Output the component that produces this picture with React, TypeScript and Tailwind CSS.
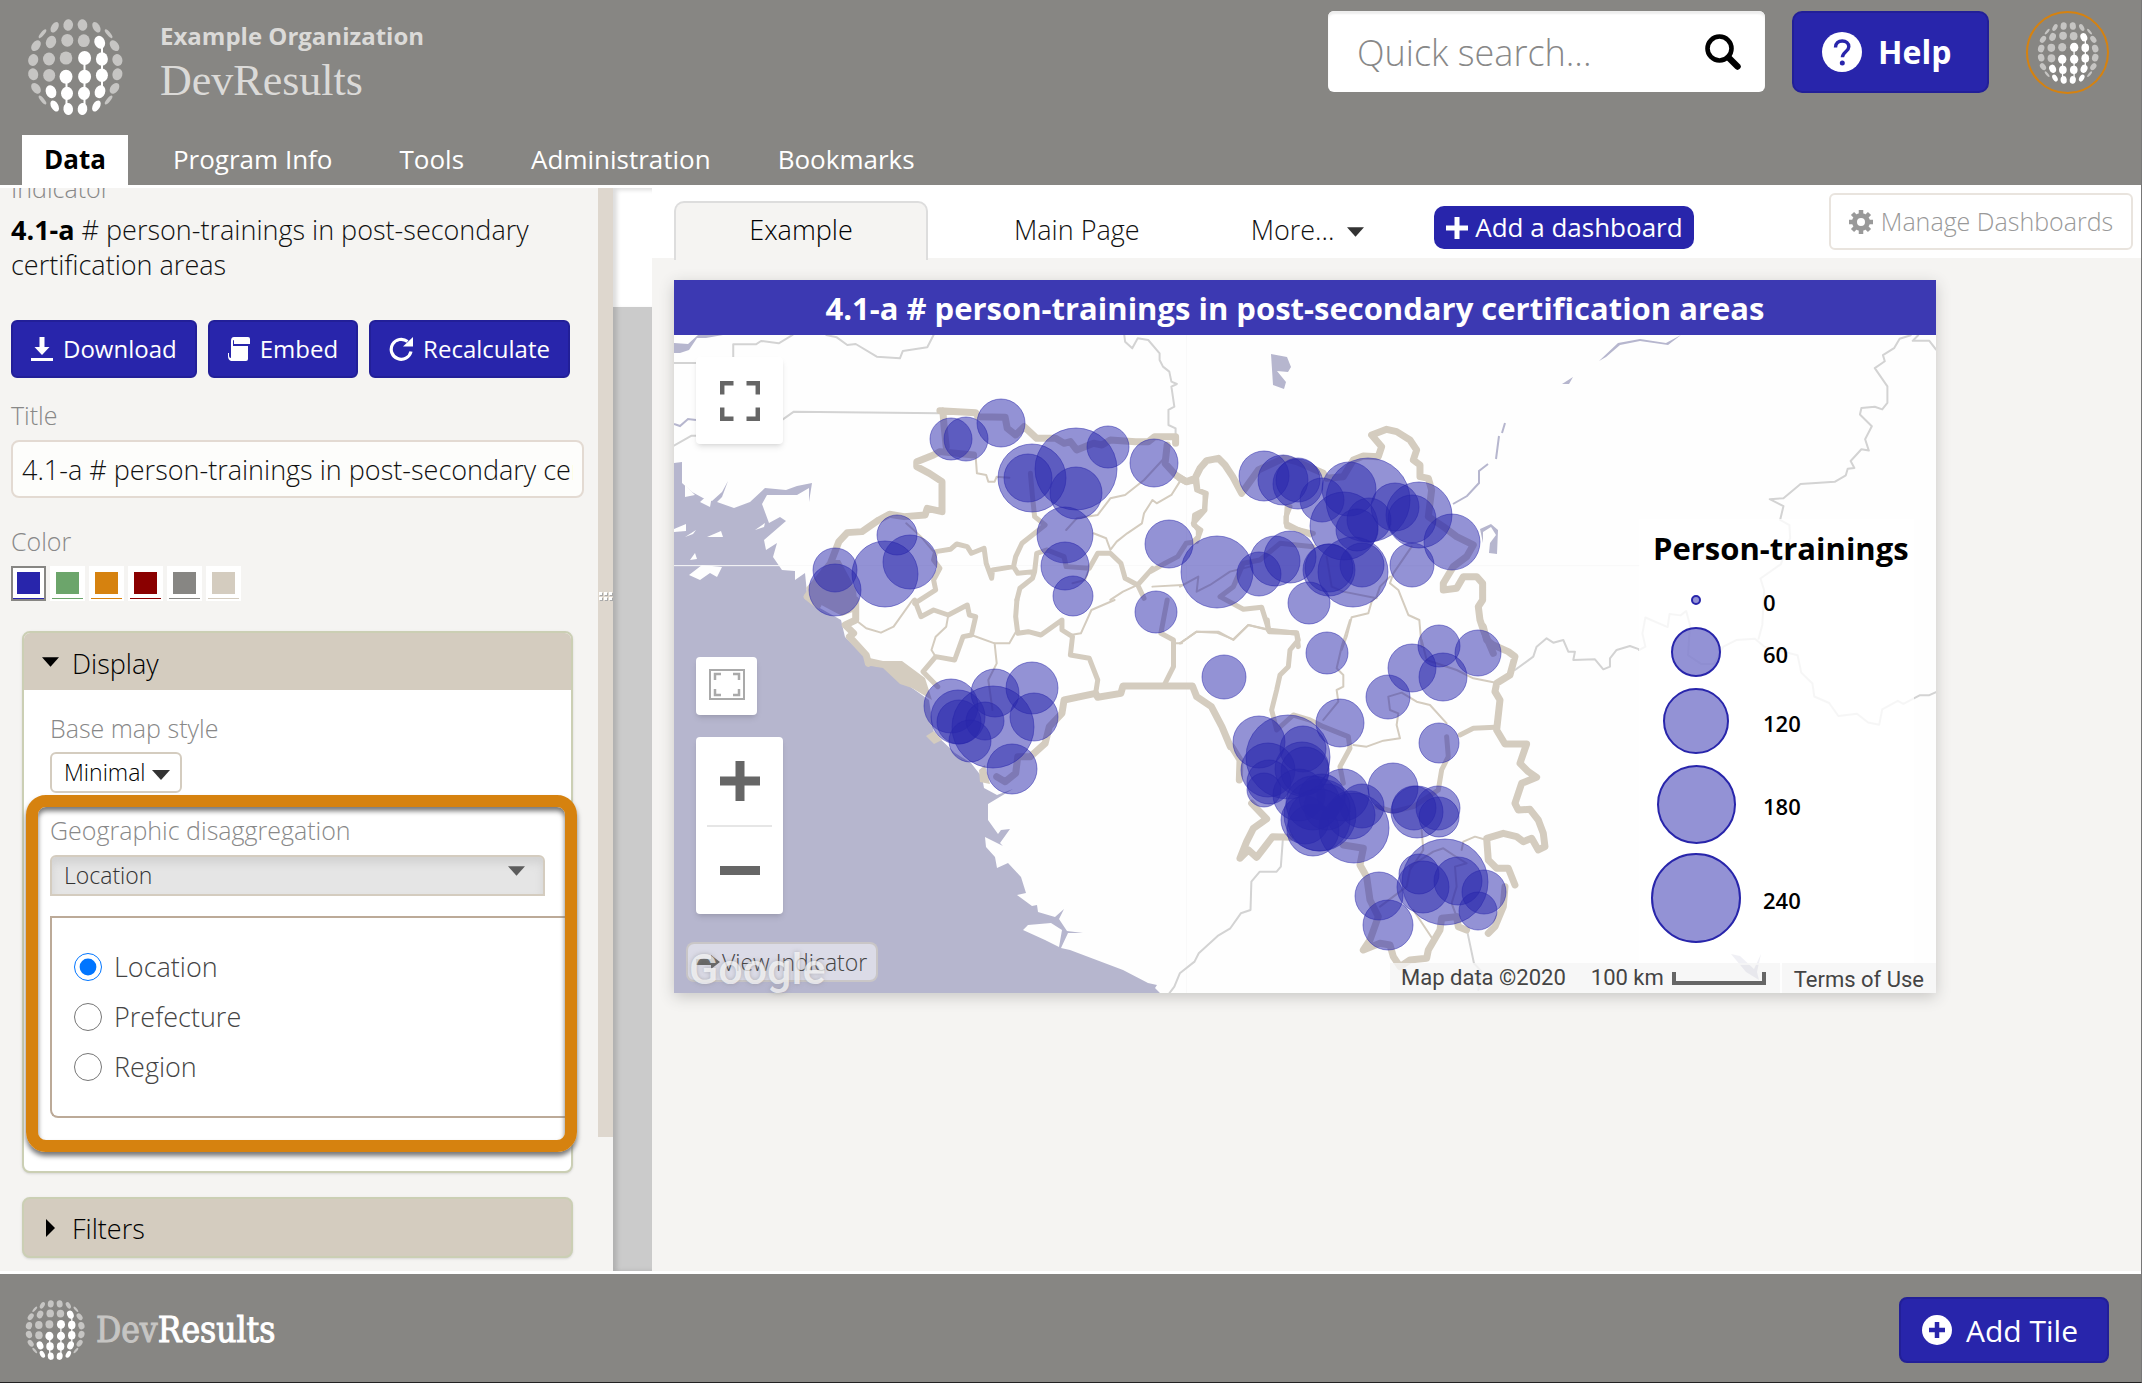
import { useState } from "react";
import type { ReactNode } from "react";

const navItems = ["Data", "Program Info", "Tools", "Administration", "Bookmarks"];

const colors = [
  { name: "Blue", fill: "bg-[#2825ab]" },
  { name: "Green", fill: "bg-[#6ca56b]" },
  { name: "Orange", fill: "bg-[#d6820f]" },
  { name: "Red", fill: "bg-[#8a0000]" },
  { name: "Gray", fill: "bg-[#878683]" },
  { name: "Tan", fill: "bg-[#d4ccbf]" },
];

const levels = ["Location", "Prefecture", "Region"];

const legend = [
  { label: "0", size: "size-[10px]", row: "h-[34px]" },
  { label: "60", size: "size-[50px]", row: "h-[50px]" },
  { label: "120", size: "size-[66px]", row: "h-[68px]" },
  { label: "180", size: "size-[79px]", row: "h-[79px]" },
  { label: "240", size: "size-[90px]", row: "h-[88px]" },
];

// x, y, rx, ry, rotation, bright
const dots: [number, number, number, number, number, number][] = [
  [42.5, 33.7, 1.8, 5.5, 40, 0], [54.7, 27.3, 3.4, 5.8, 30, 0], [68.2, 25, 4.8, 5.8, 8, 0],
  [82.5, 25, 4.8, 5.8, -8, 0], [96.4, 27.3, 3.4, 5.8, -30, 0], [108.6, 33.7, 1.8, 5.5, -40, 0],
  [36, 45.7, 4, 6, 38, 0], [51, 42, 5, 6.4, 22, 0], [67.3, 40.3, 6, 6.4, 0, 0],
  [83.8, 40.7, 6, 6.4, 0, 0], [99.7, 42.3, 5.2, 6.6, -22, 1], [114.5, 45.7, 4, 6, -38, 0],
  [33.2, 60, 5, 6, 15, 0], [49, 59, 6, 6.4, 0, 0], [66, 58, 6.3, 6.6, 0, 0],
  [84.6, 58, 6.5, 7, 0, 1], [101.9, 59, 6, 6.8, 0, 1], [117.4, 60, 5, 6, -15, 0],
  [33.2, 74.3, 5, 6, -15, 0], [49.2, 75.3, 6, 6.4, 0, 0], [66, 76.7, 6.5, 7, 0, 1],
  [84.6, 76.7, 6.5, 7, 0, 1], [101.9, 75.3, 6, 6.8, 0, 1], [117.4, 74.3, 5, 6, 15, 0],
  [36, 88.3, 4, 6, -38, 0], [51, 91.7, 5.2, 6.6, -22, 1], [67, 93.3, 6, 6.6, 0, 1],
  [84, 93.3, 6, 6.6, 0, 1], [100, 91.7, 5.2, 6.6, 22, 1], [114.5, 88.3, 4, 6, 38, 0],
  [42.5, 100, 1.8, 5.5, -40, 0], [54.7, 106, 3.6, 6, -30, 1], [68.2, 109, 4.8, 6, -8, 1],
  [82.5, 109, 4.8, 6, 8, 1], [96.4, 106, 3.6, 6, 30, 1], [108.6, 100, 1.8, 5.5, 40, 0],
];

// One bubble per training site: x, y, radius
const bubbles = [
  [951, 439, 21], [966, 439, 22], [1001, 423, 24], [1076, 469, 41], [1032, 478, 34], [1028, 478, 24],
  [1076, 493, 26], [1108, 447, 21], [1154, 463, 24], [1065, 535, 28], [1065, 566, 24], [1073, 596, 20],
  [897, 535, 20], [910, 562, 27], [885, 574, 33], [835, 570, 22], [835, 590, 26], [1169, 544, 24],
  [1156, 612, 21], [1264, 476, 25], [1283, 480, 25], [1298, 484, 25], [1298, 480, 22], [1322, 500, 22],
  [1368, 500, 42], [1349, 489, 27], [1344, 526, 34], [1395, 507, 24], [1419, 515, 33], [1412, 519, 24],
  [1452, 542, 28], [1369, 520, 22], [1357, 530, 21], [1412, 565, 22], [1353, 572, 35], [1362, 565, 22],
  [1329, 570, 26], [1329, 568, 24], [1309, 603, 21], [1217, 572, 36], [1259, 574, 22], [1275, 561, 25],
  [1290, 557, 26], [1327, 653, 21], [1224, 677, 22], [1439, 646, 21], [1478, 653, 23], [1412, 668, 24],
  [1443, 677, 24], [1388, 697, 22], [1439, 743, 20], [1340, 723, 24], [1259, 742, 26], [1288, 757, 42],
  [1303, 749, 23], [1268, 770, 27], [1302, 769, 27], [1305, 771, 24], [1269, 782, 22], [1264, 790, 17],
  [1299, 795, 26], [1343, 795, 26], [1362, 806, 22], [1393, 788, 25], [1417, 812, 26], [1414, 808, 22],
  [1438, 808, 22], [1439, 817, 20], [1354, 828, 35], [1351, 815, 24], [1320, 815, 36], [1305, 820, 24],
  [1313, 830, 26], [1322, 797, 23], [1327, 807, 23], [1313, 803, 27], [1319, 820, 31], [1445, 882, 43],
  [1419, 874, 20], [1423, 887, 26], [1458, 881, 24], [1484, 892, 22], [1478, 911, 19], [1379, 896, 24],
  [1388, 925, 25], [951, 706, 27], [958, 717, 27], [959, 722, 22], [993, 727, 41], [995, 693, 24],
  [1032, 688, 26], [1034, 717, 24], [985, 721, 19], [970, 741, 21], [1012, 769, 25],
];

// Border lines come in five sheets, each with its own origin and scale.
const sheets = [
  {
    transform: "translate(660 180) scale(0.4209 0.3333)",
    thick:
      "M665,692 L750,698 755,710 820,712 825,745 845,765 865,740 895,775 940,775 960,790 975,785 990,810 1030,790 1050,795 1070,780 1130,785 1160,785 1175,770 1225,770 1225,790 M672,692 L675,740 680,800 M745,825 L665,815 650,825 610,845 610,860 640,880 670,905 670,995 635,985 630,1005 580,1010 545,1003 520,1020 480,1055 445,1058 425,1085 405,1150 375,1200 350,1250 M1205,795 L1200,850 1225,885 1250,905 1270,900",
    medium:
      "M880,880 L885,950 890,1010 915,1035 860,1090 845,1130 840,1160 790,1170 788,1195 775,1150 770,1105 740,1120 730,1100 705,1092 690,1108 655,1115 650,1140 665,1165 650,1200 655,1230 605,1270 M840,1160 L850,1180 890,1175 885,1195 855,1225 848,1260 M890,1175 L895,1120 920,1110 960,1130 965,1160 1020,1165 1040,1120 1070,1120 1095,1150 1105,1195 1135,1215 1170,1165 M1275,895 L1278,930 1298,940 1293,990 1270,1005 1268,1035 1285,1050 1275,1085 1250,1090 1230,1130 1200,1150 1165,1175 M1135,1215 L1150,1255 M1490,980 L1487,1030 1510,1045 1545,1065",
    thin:
      "M750,830 L753,880 775,885 780,905 795,905 800,890 830,893 M1205,825 L1150,900 1105,945 1070,955 1040,1005 990,1015 965,1050 M1235,905 L1215,945 1180,970 1170,960 1150,1000 1145,1030 1110,1060 1085,1085 1070,1110 1060,1075 1030,1060 M585,1030 L620,1070 650,1115 M1020,1165 L1010,1200 980,1210 M1135,1215 L1100,1235 1070,1260 M1170,1220 L1240,1215",
    country:
      "M174,530 L174,493 228,493 240,483 282,490 315,465 M395,465 L420,472 445,495 465,492 515,530 570,535 577,513 635,502 650,465 M33,549 L88,549 M292,718 L318,695 665,700 M33,797 L75,767 88,767 M1103,465 L1105,485 1122,505 1135,475 1160,480 1187,520 1187,540 1195,560 1210,575 1215,605 1228,612 1215,620 1222,680 1208,690 1208,735 1225,745 1225,770",
    faint: "M33,1157 L1568,1157 M1251,465 L1251,1260",
  },
  {
    transform: "translate(1180 330) scale(0.3333)",
    thick:
      "M0,445 L20,455 45,445 60,415 80,392 115,385 135,405 158,440 185,490 235,420 310,385 350,395 430,430 440,445 490,440 520,390 550,378 595,380 605,350 575,315 620,298 650,305 690,330 710,360 700,390 720,405 720,440 745,445 755,480 745,560 790,590 830,620 880,645 860,680 820,710 790,760 790,780 830,775 850,740 890,740 908,760 908,810 895,830 900,870 910,900 940,970",
    medium:
      "M45,450 L50,480 75,490 75,540 40,580 55,600 55,620 40,635 M330,530 L318,560 320,590 400,610 M400,650 L300,640 240,690 190,700 160,770 120,800 190,838 245,832 268,905 350,908 355,950",
    thin:
      "M0,770 L55,740 50,785 90,765 150,725 210,710 M0,940 L50,905 115,905 160,930 205,885 265,900 M440,680 L455,770 490,785 590,805 M695,650 L640,730 630,760 655,780 685,855 718,870 725,950 M630,740 L600,770 590,800 575,815 565,850 515,862 500,920 485,960",
    country: "",
    faint: "M355,707 L1378,707",
  },
  {
    transform: "translate(660 600) scale(0.4209 0.3333)",
    thick:
      "M350,-10 L375,15 M465,0 L465,60 440,75 460,100 450,110 490,165 495,190 M800,530 L820,545 845,520 850,470 880,470 915,430 925,380 955,340 960,300 1035,280 1040,292 1095,280 1100,258 1265,258 1275,290 1310,320 1335,380 1355,440",
    medium:
      "M1035,280 L1040,240 1020,175 975,165 980,110 955,90 955,60 905,105 875,95 850,100 845,50 848,0 M605,0 L620,50 650,30 685,45 730,15 735,45 750,50 740,105 720,110 700,180 655,170 625,215 660,260 M1200,250 L1220,200 1220,120 1190,100 1205,0",
    thin:
      "M470,65 L490,85 525,98 555,80 600,0 M685,45 L680,80 655,110 645,150 655,170 M740,105 L795,130 830,130 848,90 M795,130 L800,190 780,240 790,330 M975,105 L1000,100 1025,30 1080,0 M1225,130 L1240,130",
    country:
      "M1480,715 L1475,800 1465,815 1425,815 1405,845 1403,930 1380,940 1355,985 1325,1008 1280,1060 1270,1085 1235,1120 1222,1160 1210,1180",
    faint: "M1251,0 L1251,1180",
  },
  {
    transform: "translate(1180 620) scale(0.3333)",
    thick:
      "M155,380 L180,420 178,480 M215,550 L260,597 220,625 200,665 180,715 205,690 230,712 278,650 330,652 M490,675 L550,685 540,735 560,770 570,840 595,890 570,960 550,990 600,970 630,975 640,1010 660,1040 690,1020 740,1015 745,990 780,930 785,895 830,890 835,920 860,930 M925,940 L945,920 970,860 975,800 M910,20 L920,60 940,75 985,95 1005,110 990,165 950,190 945,215 960,240 950,330 975,372 1040,372 1020,430 1045,455 1070,472 1025,490 1005,550 1015,570 1050,568 1075,600 1090,640 1095,680 1075,690 1055,655 1030,665 1010,650 970,640 920,655 925,720 950,745 985,745 1005,795",
    medium:
      "M262,0 L265,30 350,40 355,60 330,90 325,140 300,165 290,210 275,270 290,330 340,285 390,300 430,320 505,350 510,385 480,440 490,490 M840,345 L880,325 945,322 M800,350 L805,410 785,450 775,510 700,560 640,575 590,560",
    thin:
      "M0,70 L50,35 110,38 160,58 205,15 262,28 M510,0 L485,80 470,145 490,165 490,200 470,210 475,245 430,300 M520,375 L560,380 610,362 660,355 650,315 655,280 630,270 625,230 665,218 710,245 750,255 800,310 M725,60 L740,120 830,150 880,175 940,187 M725,630 L730,690 690,750 680,800 600,860 M845,690 L850,665 885,650 920,660 M690,740 L760,695 790,685 820,705 860,730 825,740 830,800 815,850 830,890 M700,870 L760,960",
    country:
      "M1005,150 L1060,110 1070,80 1100,55 1120,68 1150,60 1165,95 1185,95 1180,120 1245,118 1270,148 1290,140 1290,115 1310,90 1350,78 1378,88 M862,935 L882,1030 905,1055 895,1110",
    faint: "",
  },
  {
    transform: "translate(1560 330) scale(0.3712 0.4337)",
    thick: "",
    medium: "",
    thin: "",
    country:
      "M945,12 L915,20 900,42 870,58 875,72 848,88 882,130 882,168 868,183 848,177 812,180 808,195 840,222 822,252 832,278 812,275 783,302 793,318 775,320 770,335 740,350 648,355 602,388 565,390 602,406 593,438 618,450 620,480 595,540 540,573 550,600 545,680 535,712 M965,12 L950,25 995,25 1013,45 M213,738 L230,730 222,700 230,663 290,685 295,655 325,658 340,648 350,680 345,750 380,770 415,770 440,730 475,715 525,712 550,730 640,750 650,790 680,815 685,845 725,860 750,890 800,885 830,905 860,910 868,875 910,855 925,862 970,842 995,842 1013,835",
    faint: "",
  },
];

function GlobeLogo({ className }: { className: string }) {
  return (
    <svg viewBox="22 14 106 106" className={className} aria-hidden="true">
      <path d="M102 42V92M84.5 58V109M66.5 77V109" stroke="#fff" strokeWidth="2" />
      {dots.map(([x, y, rx, ry, angle, bright]) => (
        <ellipse
          key={`${x}-${y}`}
          cx={x}
          cy={y}
          rx={rx}
          ry={ry}
          transform={`rotate(${angle} ${x} ${y})`}
          fill={bright ? "#fff" : "#c6c5c3"}
        />
      ))}
    </svg>
  );
}

function Caret({ className }: { className: string }) {
  return (
    <svg viewBox="0 0 18 10" className={className} aria-hidden="true">
      <path d="M0 0h18L9 10z" fill="currentColor" />
    </svg>
  );
}

function Header() {
  return (
    <header className="flex h-[185px] flex-col justify-between bg-[#878683]">
      <div className="flex justify-between pt-[11px] pr-8">
        <div className="flex pl-[22px]">
          <GlobeLogo className="mt-[3px] size-[106px]" />
          <div className="pl-8 text-[#dbdad8]">
            <p className="pt-[7px] text-2xl leading-[36px] font-bold">Example Organization</p>
            <p className="font-['Liberation_Serif',serif] text-[44px] leading-[54px]">DevResults</p>
          </div>
        </div>
        <div className="flex items-start">
          <form className="flex h-[81px] w-[437px] items-center rounded-md bg-white pr-6 pl-[29px] shadow-[inset_0_3px_2px_#eee]">
            <input
              type="search"
              aria-label="Quick search"
              placeholder="Quick search..."
              className="min-w-0 flex-1 pt-0.5 text-[36px] font-light text-[#333] outline-none placeholder:text-[#888]"
            />
            <button type="submit" aria-label="Search" className="text-black">
              <svg viewBox="0 0 36 36" className="size-9" fill="none" stroke="currentColor">
                <circle cx="14.5" cy="14.5" r="12" strokeWidth="4.6" />
                <path d="M23.5 23.5l9 9" strokeWidth="6.4" strokeLinecap="round" />
              </svg>
            </button>
          </form>
          <button className="ml-[27px] flex h-[82px] w-[197px] items-center rounded-[10px] border-2 border-[#221f98] bg-[#2825ab] pl-7 text-[32px] font-bold text-white">
            <svg viewBox="0 0 40 40" className="mr-4 size-10" aria-hidden="true">
              <circle cx="20" cy="20" r="20" fill="#fff" />
              <path d="M13.5 15.5c0-4.5 3-6.5 6.7-6.5 3.9 0 6.6 2.2 6.6 5.7 0 4.8-6.4 5.3-6.4 10.6" fill="none" stroke="#2825ab" strokeWidth="3.4" />
              <circle cx="20.3" cy="31" r="2.5" fill="#2825ab" />
            </svg>
            Help
          </button>
          <button aria-label="Account" className="ml-[37px] flex size-[83px] items-center justify-center rounded-full border-2 border-[#d6820f]">
            <GlobeLogo className="size-[68px]" />
          </button>
        </div>
      </div>
      <nav className="flex gap-[23px] pl-[22px]">
        {navItems.map((item, index) => (
          <a
            key={item}
            href="#"
            className={
              index === 0
                ? "h-[50px] bg-white px-[22px] text-[26px] leading-[48px] font-bold text-black"
                : "h-[50px] px-[22px] text-[26px] leading-[48px] text-white"
            }
          >
            {item}
          </a>
        ))}
      </nav>
    </header>
  );
}

function PanelButton({ icon, children }: { icon: ReactNode; children: ReactNode }) {
  return (
    <button className="flex h-[58px] items-center gap-2.5 rounded-md border-2 border-[#221f98] bg-[#2825ab] px-[18px] text-2xl text-white">
      {icon}
      {children}
    </button>
  );
}

function DisplaySection() {
  const [level, setLevel] = useState("Location");

  return (
    <section className="mt-[30px] mr-3 ml-[11px] rounded-lg border-2 border-[#cbcfb4] bg-white shadow-sm">
      <button className="flex h-[57px] w-full items-center rounded-t-md bg-[#d4ccbf] pl-[18px] text-[27px] leading-[57px] font-light text-black">
        <Caret className="mr-[13px] h-2.5 w-[17px]" />
        <span className="pt-1">Display</span>
      </button>
      <div className="pt-[21px] pr-[26px] pb-[53px] pl-[26px]">
        <label htmlFor="base-map" className="block text-[25px] leading-[35px] font-light text-[#888]">
          Base map style
        </label>
        <div className="relative mt-1.5 w-[132px]">
          <select id="base-map" className="block h-[41px] w-full appearance-none rounded-md border-2 border-[#d4ccbf] bg-white pl-3 text-[23px] font-light text-black">
            <option>Minimal</option>
          </select>
          <Caret className="pointer-events-none absolute top-[18px] right-3 h-2.5 w-[18px] text-[#333]" />
        </div>
        <div className="relative mt-5">
          <label htmlFor="geo-level" className="block text-[25px] leading-[35px] font-light text-[#888]">
            Geographic disaggregation
          </label>
          <div className="relative mt-[7px]">
            <select
              id="geo-level"
              value={level}
              onChange={(e) => setLevel(e.target.value)}
              className="block h-[41px] w-full appearance-none rounded-t-md border-2 border-[#d4ccbf] bg-[#e5e5e5] pl-3 text-[23px] font-light text-[#333] shadow-[inset_0_6px_8px_#d2d2d2]"
            >
              {levels.map((item) => (
                <option key={item}>{item}</option>
              ))}
            </select>
            <Caret className="pointer-events-none absolute top-[11px] right-5 h-2.5 w-[17px] text-[#5c5c5c]" />
          </div>
          <fieldset className="mt-5 -mr-6 rounded-bl-lg border-2 border-r-0 border-[#bcaa98] py-6 pl-[22px]">
            {levels.map((item) => (
              <label key={item} className="flex h-[50px] items-center gap-3 text-[27px] font-light text-[#444]">
                <input
                  type="radio"
                  name="level"
                  checked={level === item}
                  onChange={() => setLevel(item)}
                  className="size-7"
                />
                {item}
              </label>
            ))}
          </fieldset>
          <div className="pointer-events-none absolute -top-[18px] -right-8 -bottom-[34px] -left-6 rounded-[20px] border-[12px] border-[#d6820f] shadow-[0_4px_5px_#777,inset_0_4px_5px_#777]" />
        </div>
      </div>
    </section>
  );
}

function EditPanel() {
  return (
    <aside className="w-[598px] shrink-0 overflow-hidden bg-[#f5f4f2] pb-[13px] pl-[11px]">
      <div className="-mt-[17px] w-[574px]">
        <p className="text-[25px] leading-[35px] font-light text-[#888]">Indicator</p>
        <p className="mt-1.5 text-[27px] leading-[35px] font-light text-[#111]">
          <b className="font-bold text-black">4.1-a</b> # person-trainings in post-secondary certification areas
        </p>
        <div className="mt-[38px] flex gap-[11px]">
          <PanelButton
            icon={
              <svg viewBox="0 0 22 24" className="h-6 w-[22px]" fill="currentColor" aria-hidden="true">
                <path d="M8.5 0h5v10h5L11 18 3.5 10h5zM0 21h22v3H0z" />
              </svg>
            }
          >
            Download
          </PanelButton>
          <PanelButton
            icon={
              <svg viewBox="0 0 22 24" className="h-6 w-[22px]" fill="currentColor" aria-hidden="true">
                <path d="M6 0h14q2 0 2 2v5H6V3q-1 0-1 1v5h15v13q0 2-2 2H3q-3-1-3-5v-3h1v3q0 2 2 2V4q0-4 3-4z" />
              </svg>
            }
          >
            Embed
          </PanelButton>
          <PanelButton
            icon={
              <svg viewBox="0 0 24 24" className="size-6" aria-hidden="true">
                <path d="M18.5 4.5A10 10 0 1 0 22 14.5" fill="none" stroke="currentColor" strokeWidth="3.2" />
                <path d="M24 0v9.5h-10z" fill="currentColor" />
              </svg>
            }
          >
            Recalculate
          </PanelButton>
        </div>
        <label htmlFor="tile-title" className="mt-5 block text-[25px] leading-[35px] font-light text-[#888]">
          Title
        </label>
        <input
          id="tile-title"
          defaultValue="4.1-a # person-trainings in post-secondary certification areas"
          className="mt-[7px] block h-[58px] w-[573px] rounded-lg border-2 border-[#e3dad2] bg-[#fdfdfb] px-[9px] text-[27px] font-light text-[#111]"
        />
        <p className="mt-[26px] text-[25px] leading-[35px] font-light text-[#888]">Color</p>
        <div className="mt-[7px] flex gap-1">
          {colors.map((color, index) => (
            <button
              key={color.name}
              aria-label={color.name}
              className={
                index === 0
                  ? "flex size-[35px] flex-col items-center justify-between border-2 border-[#878683] bg-white pt-1"
                  : "flex size-[35px] flex-col items-center justify-between border-2 border-white bg-white pt-1"
              }
            >
              <span className={`h-[22px] w-[23px] ${color.fill}`} />
              <span className={`h-px w-full ${color.fill}`} />
            </button>
          ))}
        </div>
        <DisplaySection />
        <button className="mt-6 ml-[11px] flex h-[61px] w-[551px] items-center rounded-lg border-2 border-[#cbcfb4] bg-[#d4ccbf] pl-[22px] text-[27px] font-light text-black shadow-sm">
          <svg viewBox="0 0 9 18" className="mr-[17px] h-[18px] w-[9px]" aria-hidden="true">
            <path d="M0 0l9 9-9 9z" />
          </svg>
          <span className="pt-1">Filters</span>
        </button>
      </div>
    </aside>
  );
}

function MapDrawing() {
  return (
    <svg viewBox="674 335 1262 658" className="block h-auto w-full bg-[#fefefe]" fill="none" aria-label="Map of person-trainings">
      {/* water */}
      <g fill="#b6b6ce">
        <path d="M674,463 L682,462 682,483 692,492 703,498 712,501 722,492 728,481 722,497 717,502 734,508 750,502 765,488 786,490 797,486 812,483 809,502 809,488 797,495 767,495 762,504 769,523 780,517 786,521 764,540 766,550 777,543 773,557 782,570 795,571 795,580 805,573 807,593 818,607 841,620 845,637 866,657 866,665 883,667 912,688 929,700 934,733 955,753 971,763 982,777 984,788 997,795 1013,789 988,804 988,820 998,834 1001,830 1010,829 1000,843 1003,846 985,837 986,847 995,857 997,868 1008,863 1021,877 1026,893 1017,895 1032,906 1037,905 1038,912 1055,917 1064,909 1059,919 1067,931 1083,933 1068,933 1061,948 1070,950 1123,970 1148,983 1157,985 1155,988 1160,993 674,993z" />
        <path d="M674,343 L688,344 698,335 723,335 706,338 697,338 689,350 680,353 674,353z" />
        <path d="M1271,354 L1287,357 1291,367 1288,372 1277,371 1286,382 1284,389 1273,385z" />
        <path d="M1599,361 L1618,343 1640,339 1666,343 1681,335 1668,345 1640,341 1620,345 1606,357zM1562,384 L1573,377 1569,384z" />
        <path d="M1480,529 L1491,524 1498,530 1497,554 1489,553 1490,543 1496,535 1491,527 1483,532 1483,543z" />
        <path d="M1731,954 L1740,956 1754,969 1761,954 1757,972 1759,980 1746,972z" />
      </g>
      <g fill="#fefefe">
        <path d="M685,485 L695,495 685,497zM713,490 L700,502 710,507zM674,529 L686,524 686,531 674,532zM707,537 L721,531 723,537zM755,530 L765,523 764,527zM690,560 L695,553 697,559zM689,575 L702,565 722,567 717,577 710,573 700,580zM685,537 L696,530 693,534z" />
        <path d="M1023,930 L1028,925 1051,923 1062,930 1059,947 1045,940z" />
      </g>
      <path d="M674,424 L680,426 688,419 696,420 M1502,433 L1505,423 M1499,436 L1496,459 M1488,464 L1479,471 1479,483 1467,496 1453,504" stroke="#b6b6ce" strokeWidth="2" />
      {sheets.map((sheet) => (
        <g key={sheet.transform} transform={sheet.transform} strokeLinejoin="round" strokeLinecap="round">
          <path d={sheet.faint} stroke="#f9f9f9" strokeWidth="1" vectorEffect="non-scaling-stroke" />
          <path d={sheet.country} stroke="#d3d3d3" strokeWidth="2" vectorEffect="non-scaling-stroke" />
          <path d={sheet.thin} stroke="#d4ccbf" strokeWidth="2" vectorEffect="non-scaling-stroke" />
          <path d={sheet.medium} stroke="#d4ccbf" strokeWidth="5" vectorEffect="non-scaling-stroke" />
          <path d={sheet.thick} stroke="#d4ccbf" strokeWidth="7" vectorEffect="non-scaling-stroke" />
        </g>
      ))}
      <path d="M806,588 L812,600 842,616 858,610 856,590 840,560 830,560z M865,657 L883,661 902,661 925,678 932,700 912,688 900,684 883,668 865,665z M926,736 L934,731 942,740 934,744z M979,770 L985,765 990,784 980,782z" fill="#d4ccbf" />
      <g fill="#2825ab" fillOpacity="0.5" stroke="#2825ab" strokeOpacity="0.5">
        {bubbles.map(([x, y, r]) => (
          <circle key={`${x}-${y}-${r}`} cx={x} cy={y} r={r} />
        ))}
      </g>
    </svg>
  );
}

function MapControls() {
  return (
    <>
      <button aria-label="Toggle fullscreen" className="absolute top-[22px] left-[22px] flex size-[87px] items-center justify-center rounded bg-white shadow-md">
        <svg viewBox="0 0 40 40" className="size-10" fill="none" stroke="#666" strokeWidth="4.5">
          <path d="M2.2 13.5V2.2h11.3M26.5 2.2h11.3v11.3M37.8 26.5v11.3H26.5M13.5 37.8H2.2V26.5" />
        </svg>
      </button>
      <button aria-label="Zoom to fit" className="absolute top-[322px] left-[22px] flex h-[58px] w-[61px] items-center justify-center rounded bg-white pb-1 shadow-md">
        <svg viewBox="0 0 36 31" className="h-[31px] w-9" fill="none" stroke="#aaa">
          <path d="M1 1h34v29H1z" strokeWidth="2" />
          <path d="M6 11V5h6M24 5h6v6M30 20v6h-6M12 26H6v-6" strokeWidth="2.5" />
        </svg>
      </button>
      <div className="absolute top-[402px] left-[22px] flex h-[177px] w-[87px] flex-col items-center rounded bg-white shadow-md">
        <button aria-label="Zoom in" className="flex w-full flex-1 items-center justify-center">
          <svg viewBox="0 0 40 40" className="size-10" fill="#666">
            <path d="M15.5 0h9v15.5H40v9H24.5V40h-9V24.5H0v-9h15.5z" />
          </svg>
        </button>
        <span className="h-0.5 w-[65px] bg-[#e6e6e6]" />
        <button aria-label="Zoom out" className="flex w-full flex-1 items-center justify-center">
          <svg viewBox="0 0 40 9" className="h-[9px] w-10" fill="#666">
            <path d="M0 0h40v9H0z" />
          </svg>
        </button>
      </div>
    </>
  );
}

function MapTile() {
  return (
    <article className="w-full max-w-[1262px] shadow-[0_4px_14px_#c8c7c5]">
      <h2 className="h-[55px] bg-[#3c39b2] pr-5 text-center text-[31px] leading-[57px] font-bold text-white">
        4.1-a # person-trainings in post-secondary certification areas
      </h2>
      <div className="relative">
        <MapDrawing />
        <MapControls />
        <div className="absolute top-[184px] right-[22px] w-[275px] bg-white/80 pb-[23px] pl-3 text-black">
          <h3 className="pl-0.5 text-[31px] leading-[58px] font-bold">Person-trainings</h3>
          <ul className="flex flex-col gap-2.5 pt-1.5">
            {legend.map((item) => (
              <li key={item.label} className={`flex items-center gap-[22px] text-[22px] font-semibold ${item.row}`}>
                <span className="flex w-[90px] justify-center">
                  <span className={`rounded-full border-2 border-[#2825ab] bg-[#2825ab]/50 ${item.size}`} />
                </span>
                <span className="pt-1">{item.label}</span>
              </li>
            ))}
          </ul>
        </div>
        <a href="#" className="absolute bottom-[11px] left-3 flex h-10 w-[192px] items-center rounded-lg border-2 border-[#c2bdb9]/70 bg-white/50 pl-2 text-[23px] font-light text-[#444]">
          <svg viewBox="0 0 24 14" className="mr-0.5 h-[14px] w-6" aria-hidden="true">
            <path d="M0 4h15V0l9 7-9 7v-4H0z" fill="#666" />
          </svg>
          View Indicator
        </a>
        <span className="pointer-events-none absolute bottom-0 left-[15px] font-['Roboto',sans-serif] text-[43px] leading-[48px] font-medium text-white/70 [text-shadow:0_0_4px_#8888]">
          Google
        </span>
        <div className="absolute right-0 bottom-0 flex h-[30px] gap-0.5 font-['Roboto',sans-serif] text-[22px] leading-[34px] text-[#444]">
          <div className="flex items-center gap-[25px] bg-[#f5f5f5]/80 pr-3.5 pl-[11px]">
            <span>Map data ©2020</span>
            <span className="flex items-center gap-2">
              100 km
              <span className="h-[13px] w-[94px] border-4 border-t-0 border-[#666]" />
            </span>
          </div>
          <a href="#" className="bg-[#f5f5f5]/80 px-3">
            Terms of Use
          </a>
        </div>
      </div>
    </article>
  );
}

function Dashboard() {
  return (
    <main className="min-w-0 flex-1 bg-[#f5f4f2]">
      <div className="flex h-[70px] items-start bg-white pl-[22px] text-[27px] font-light text-[#111]">
        <a href="#" className="mt-[13px] h-[59px] w-[254px] rounded-t-[10px] border-2 border-b-0 border-[#ddd] bg-[#f5f4f2] text-center leading-[53px] text-black">
          Example
        </a>
        <a href="#" className="mt-[15px] ml-[86px] leading-[53px]">
          Main Page
        </a>
        <button className="mt-[15px] ml-[111px] flex items-center gap-[13px] leading-[53px]">
          More...
          <Caret className="mt-1 h-2.5 w-[17px] text-[#333]" />
        </button>
        <button className="mt-[18px] ml-[70px] flex h-[43px] w-[260px] items-center justify-center gap-[7px] rounded-[10px] bg-[#2825ab] text-[26px] font-normal text-white">
          <svg viewBox="0 0 22 22" className="size-[22px]" fill="currentColor" aria-hidden="true">
            <path d="M8.5 0h5v8.5H22v5h-8.5V22h-5v-8.5H0v-5h8.5z" />
          </svg>
          Add a dashboard
        </button>
        <button className="mt-[5px] mr-2 ml-auto flex h-[57px] w-[304px] items-center justify-center gap-2 rounded-md border-2 border-[#e9e4de] text-[25px] text-[#999]">
          <svg viewBox="0 0 24 24" className="size-6" aria-hidden="true">
            <circle cx="12" cy="12" r="6.5" fill="none" stroke="#999" strokeWidth="5" />
            <path d="M12 0v5M12 19v5M0 12h5M19 12h5M3.5 3.5L7 7M17 17l3.5 3.5M20.5 3.5L17 7M7 17l-3.5 3.5" stroke="#999" strokeWidth="4.5" />
          </svg>
          Manage Dashboards
        </button>
      </div>
      <div className="p-[22px]">
        <MapTile />
      </div>
    </main>
  );
}

export default function App() {
  return (
    <div className="flex min-h-screen flex-col border-r border-b border-r-[#777] border-b-[#222] bg-white font-['Open_Sans',sans-serif]">
      <Header />
      <div className="flex flex-1 py-[3px]">
        <EditPanel />
        <div className="w-[15px] shrink-0 bg-[#f5f4f2]">
          <div className="flex h-[949px] items-center justify-center bg-[#ded7ce] pb-[134px]">
            <div className="grid grid-cols-3 gap-0.5">
              {[0, 1, 2, 3, 4, 5].map((n) => (
                <span key={n} className="size-[3px] bg-white shadow-[1px_1px_0_#aaa]" />
              ))}
            </div>
          </div>
        </div>
        <div className="flex w-[39px] shrink-0 flex-col bg-[#cbcbcb] shadow-[inset_4px_0_4px_#b0b0b0]">
          <div className="h-[119px] bg-white shadow-[inset_4px_2px_4px_#ddd]" />
        </div>
        <Dashboard />
      </div>
      <footer className="flex h-[108px] items-center justify-between bg-[#878683] pt-1 pr-8 pl-[22px]">
        <div className="flex items-center gap-2">
          <GlobeLogo className="size-[66px]" />
          <p className="font-['DejaVu_Serif_Condensed','DejaVu_Serif',serif] text-[35px] text-white [-webkit-text-stroke:1px]">
            <span className="text-[#c6c5c3]">Dev</span>Results
          </p>
        </div>
        <button className="flex h-[66px] w-[210px] items-center gap-3.5 rounded-lg border-2 border-[#221f98] bg-[#2825ab] pl-[21px] text-[30px] text-white">
          <svg viewBox="0 0 30 30" className="size-[30px]" aria-hidden="true">
            <circle cx="15" cy="15" r="15" fill="#fff" />
            <path d="M15 7v16M7 15h16" stroke="#2825ab" strokeWidth="4.5" />
          </svg>
          Add Tile
        </button>
      </footer>
    </div>
  );
}
